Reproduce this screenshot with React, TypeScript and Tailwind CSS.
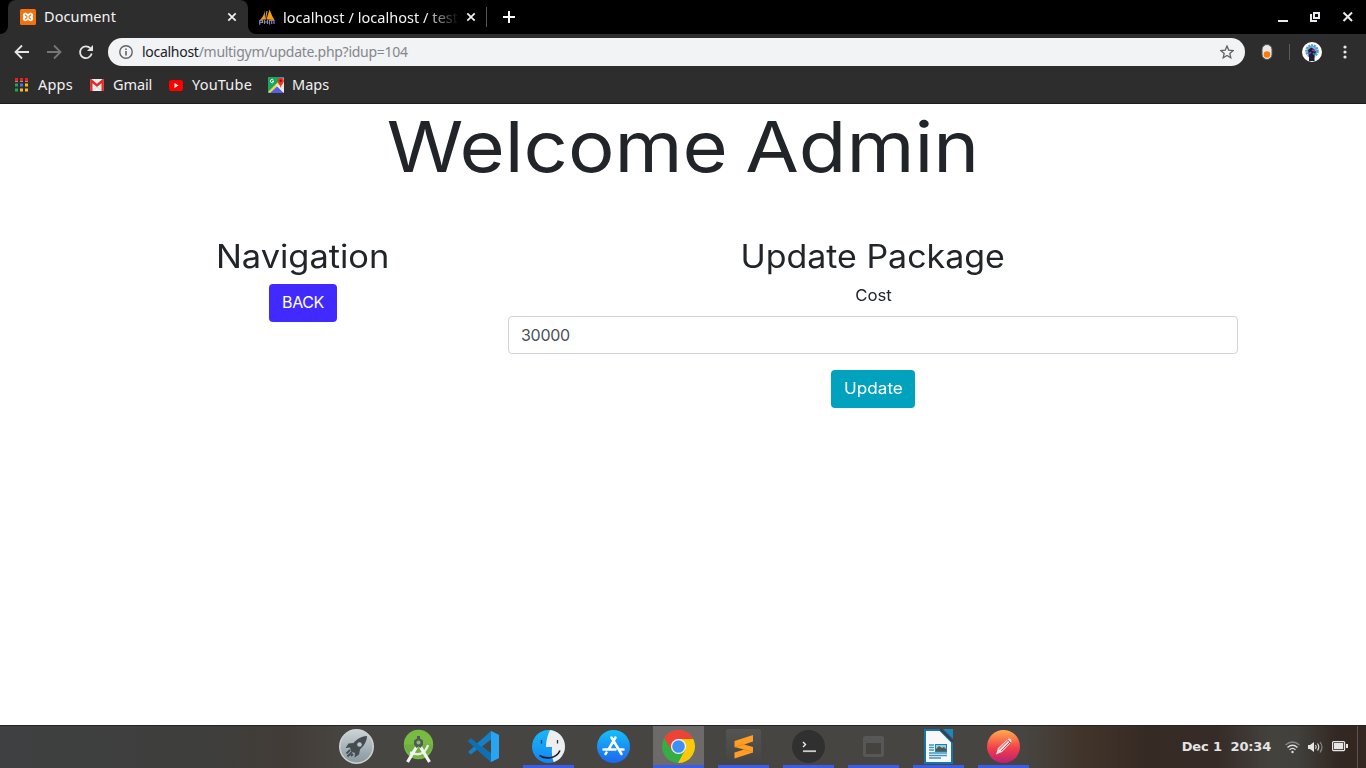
import React from "react";

const ubuntu = "font-['Noto_Sans','Open_Sans',sans-serif]";

function Xampp() {
  return (
    <svg width="16" height="16" viewBox="0 0 16 16">
      <rect width="16" height="16" rx="1.5" fill="#f4700c" />
      <path d="M3.500 7.800C2 6 3.200 3.700 5.300 3.700C7 3.700 7.300 5 8 5C8.700 5 9 3.700 10.700 3.700C12.800 3.700 14 6 12.500 7.800C14 9.800 12.800 12.200 10.700 12.200C9 12.200 8.700 11 8 11C7.300 11 7 12.200 5.300 12.200C3.200 12.200 2 9.800 3.500 7.800Z" fill="#fff" />
      <path d="M5.300 6L7 7.500M10.700 6L9 7.500M5.300 10L7 8.700M10.700 10L9 8.700" stroke="#f4700c" strokeWidth="1.100" strokeLinecap="round" />
    </svg>
  );
}

function Pma() {
  return (
    <svg width="16" height="16" viewBox="0 0 16 16">
      <path d="M5.800 1.500C5.500 5 3.500 8.500 1 11L6 10.500Z" fill="#f89c0e" />
      <path d="M10.500 0.500L7.500 10.500L15.500 11C13.500 8 12 4 10.500 0.500Z" fill="#f89c0e" />
      <path d="M8 2L6.500 10.500" stroke="#b4b4a0" strokeWidth="1" />
      <path d="M0.700 15.700V11.700H3.500V13.500H1M5.500 11V15M8.500 11V15M5.500 13H8.500M10.500 15.500V11.500H15V15M12.700 12V15" fill="none" stroke="#8583b0" strokeWidth="1.200" />
    </svg>
  );
}

function Cross() {
  return (
    <svg width="10" height="10" viewBox="0 0 10 10">
      <path d="M1.300 1.300L8.700 8.700M8.700 1.300L1.300 8.700" stroke="#f1f1f1" strokeWidth="1.700" />
    </svg>
  );
}

function TabBar() {
  return (
    <div className="flex h-[34px] bg-black">
      <div className="flex w-2 bg-[#2d2d2d]"><div className="w-full rounded-br-lg bg-black" /></div>
      <div className="flex w-60 items-center rounded-t-lg bg-[#2d2d2d] pr-[11px] pl-3">
        <Xampp />
        <span className="ml-2 text-[14.5px] tracking-[0.1px] text-[#f4f4f4]">Document</span>
        <span className="ml-auto"><Cross /></span>
      </div>
      <div className="flex w-2 bg-[#2d2d2d]"><div className="w-full rounded-bl-lg bg-black" /></div>
      <div className="flex w-[230px] items-center pl-[3px]">
        <Pma />
        <div className="mb-px ml-2 w-[174px] overflow-hidden [mask-image:linear-gradient(to_right,black_142px,transparent_176px)]">
          <span className="text-[14.5px] tracking-[0.04px] whitespace-nowrap text-[#f4f4f4]">localhost / localhost / test</span>
        </div>
        <span className="ml-[9px]"><Cross /></span>
      </div>
      <div className="mt-[7px] h-5 w-px bg-[#555]" />
      <svg className="mt-[11px] ml-[15px]" width="14" height="12" viewBox="0 0 14 12"><path d="M7 0V12M1 6H13" stroke="#fff" strokeWidth="2" /></svg>
      <svg className="mt-2 ml-auto" width="88" height="18" viewBox="0 0 88 18">
        <path d="M0 13H10" stroke="#e8e8ee" strokeWidth="2" />
        <path d="M36 5H41V10H36ZM33 6V13H39" fill="none" stroke="#e8e8ee" strokeWidth="2" />
        <path d="M65.500 4.500L74 13M74 4.500L65.500 13" stroke="#e8e8ee" strokeWidth="2" />
      </svg>
    </div>
  );
}

function Toolbar() {
  return (
    <div className="flex h-9 items-center bg-[#2d2d2d]">
      <svg className="ml-[14px]" width="80" height="16" viewBox="0 0 80 16" fill="none" strokeWidth="1.800">
        <path d="M15 8H2M8 1.500L1.500 8L8 14.500" stroke="#e5e5e5" />
        <path d="M33 8H46M40 1.500L46.500 8L40 14.500" stroke="#777" />
        <path d="M77.700 9.500A5.900 5.900 0 1 1 76.300 4.200" stroke="#e5e5e5" />
        <path d="M79 1V7H73Z" fill="#e5e5e5" />
      </svg>
      <div className="ml-[14px] flex h-7 w-[1137px] items-center rounded-full bg-[#f1f3f4] pr-[11px] pl-[11px]">
        <svg width="14" height="14" viewBox="0 0 14 14"><circle cx="7" cy="7" r="6.200" fill="none" stroke="#5f6368" strokeWidth="1.400" /><path d="M7 6V10.500M7 3.500V5" stroke="#5f6368" strokeWidth="1.600" /></svg>
        <span className="mb-px ml-[9px] text-[14px] tracking-[-0.28px] text-[#85878a]"><span className="text-[#202124]">localhost</span>/multigym/update.php?idup=104</span>
        <svg className="ml-auto" width="14" height="14" viewBox="0 0 14 14"><path d="M7 1L8.700 5.100L13.200 5.500L9.800 8.400L10.800 12.800L7 10.500L3.200 12.800L4.200 8.400L0.800 5.500L5.300 5.100Z" fill="none" stroke="#5f6368" strokeWidth="1.300" /></svg>
      </div>
      <svg className="ml-4" width="12" height="18" viewBox="0 0 12 18"><rect x="1" y="1.500" width="10" height="15" rx="5" fill="#e9e9e9" stroke="#555" /><circle cx="6" cy="11.500" r="3.300" fill="#ff780a" /></svg>
      <div className="ml-4 h-4 w-px bg-[#5c5c5c]" />
      <svg className="ml-3" width="20" height="20" viewBox="0 0 20 20">
        <circle cx="10" cy="10" r="10" fill="#fff" />
        <circle cx="10" cy="9" r="5.500" fill="#84b8d8" stroke="#559ecb" strokeWidth="2.600" strokeDasharray="2 .7" />
        <path d="M7 19V14L6 8L9 5.500L12 7L14 10L12.500 13V19Z" fill="#1e1e35" />
        <path d="M10 8L13 9M7 12L9 10" stroke="#a22acb" strokeWidth="1.600" /><path d="M11 11L13 13" stroke="#16a38b" strokeWidth="1.400" />
      </svg>
      <svg className="ml-[21px]" width="4" height="14" viewBox="0 0 4 14" fill="#e8e8e8"><circle cx="2" cy="2" r="1.600" /><circle cx="2" cy="7" r="1.600" /><circle cx="2" cy="12" r="1.600" /></svg>
    </div>
  );
}

function Bookmarks() {
  return (
    <div className="flex h-[34px] items-center border-b border-[#1c1c1c] bg-[#2d2d2d] pb-[3px] text-[14.5px] text-[#f1f1f1]">
      <svg className="ml-[15px]" width="13" height="14" viewBox="0 0 13 14">
        <path d="M0 1.500H3M5 1.500H8M10 1.500H13" stroke="#f21c1c" strokeWidth="3" />
        <path d="M0 3.500H13" stroke="#ddd" strokeWidth=".6" strokeDasharray="3 2" />
        <path d="M0 7H3M0 12H3" stroke="#1fa65a" strokeWidth="3" /><path d="M5 7H8" stroke="#4374f2" strokeWidth="3" /><path d="M10 7H13M5 12H8M10 12H13" stroke="#fbb912" strokeWidth="3" />
      </svg>
      <span className="ml-[10px] w-[36px] tracking-[0.2px] whitespace-nowrap">Apps</span>
      <svg className="ml-4" width="14" height="12" viewBox="0 0 14 12"><rect width="14" height="12" rx="1" fill="#eee" /><path d="M1.300 12V1.500L7 6.500L12.700 1.500V12" fill="none" stroke="#e02b22" strokeWidth="2.400" /><path d="M3 11L7 8L11 11" fill="none" stroke="#d5d5d5" /></svg>
      <span className="ml-[9px] w-[40px] tracking-[-0.1px] whitespace-nowrap">Gmail</span>
      <svg className="ml-4" width="14" height="11" viewBox="0 0 14 11"><rect width="14" height="11" rx="2.500" fill="#f00" /><path d="M5.500 3V8L9.500 5.500Z" fill="#fff" /></svg>
      <span className="ml-[9px] w-[61px] tracking-[0.2px] whitespace-nowrap">YouTube</span>
      <svg className="ml-[15px]" width="16" height="16" viewBox="0 0 16 16">
        <rect width="16" height="16" rx="1" fill="#4d88ee" /><path d="M0 0H12L9 8L0 16Z" fill="#18a75b" /><path d="M0 16L8 8L16 16Z" fill="#5361e8" /><path d="M8 8L16 1V16Z" fill="#e5e5e5" /><path d="M0 15L12 3L14 5L2 16Z" fill="#f6d450" /><path d="M8.500 7.500L15.500 14.500" stroke="#eee" strokeWidth="1.500" />
        <path d="M9.500 4A3.200 3.200 0 1 1 15.900 4C15.900 6.500 13.500 7 12.700 11C11.900 7 9.500 6.500 9.500 4Z" fill="#ee3425" /><circle cx="12.700" cy="3.800" r="1.200" fill="#791914" /><path d="M5.500 3.200A1.700 1.700 0 1 0 5.500 5V4.300H4" fill="none" stroke="#fff" strokeWidth="1" />
      </svg>
      <span className="ml-2">Maps</span>
    </div>
  );
}

function Page() {
  return (
    <main className="h-[621px] bg-white text-center font-[Inter,sans-serif] text-[#212529]">
      <h1 className="h-[134px] scale-x-[1.11] text-[70px] leading-[86px] [word-spacing:-4px]">Welcome Admin</h1>
      <div className="mx-auto flex w-[1140px]">
        <section className="flex w-[380px] flex-col items-center px-[15px]">
          <h2 className="mb-2 scale-x-[1.075] text-[32px] leading-[38px]">Navigation</h2>
          <button className="h-[38px] w-[68px] rounded bg-[#412aff] pb-px text-[16px] leading-[37px] tracking-[-0.4px] text-white">BACK</button>
        </section>
        <section className="flex w-[760px] flex-col items-center px-[15px]">
          <h2 className="mb-2 scale-x-[1.06] text-[32px] leading-[38px]">Update Package</h2>
          <label className="mb-[9px] scale-x-[1.05] text-[16px] leading-[23px]">Cost</label>
          <input defaultValue="30000" className="mb-4 h-[38px] w-full rounded border border-[#ced4da] px-3 text-[16px] tracking-[-0.3px] text-[#495057]" />
          <button className="h-[38px] w-[84px] rounded bg-[#00a2bd] pb-px text-[16px] leading-[37px] text-white"><span className="inline-block scale-x-[1.07]">Update</span></button>
        </section>
      </div>
    </main>
  );
}

function Rocket() {
  return (
    <svg className="ml-[6px]" width="35" height="35" viewBox="0 0 35 35">
      <defs><linearGradient id="rk" x2="0" y2="1"><stop stopColor="#cbd3d6" /><stop offset="1" stopColor="#86979e" /></linearGradient></defs>
      <circle cx="17.500" cy="17.500" r="16.700" fill="url(#rk)" stroke="#cfcfcf" strokeWidth="1.600" />
      <path d="M28 7C23 7 18 10 14.500 14L9.500 14.500L6.500 19L11 18.500L12 22.500L16 24L15.500 28.500L20 25.500L21 20.500C25 17 28 12 28 7Z" fill="#454d51" />
      <circle cx="20.500" cy="15.500" r="2.300" fill="#bac6ca" /><path d="M11 21L7.500 24.500M13 23L8.500 27.500M14 25L12 27" stroke="#454d51" strokeWidth="1.800" />
    </svg>
  );
}
function Android() {
  return (
    <svg width="35" height="35" viewBox="0 0 35 35">
      <circle cx="17.500" cy="15.500" r="14.700" fill="#78bb42" /><path d="M3 15.500H32A14.700 14.700 0 0 1 3 15.500Z" fill="#609d39" opacity=".4" />
      <path d="M9 23.500Q23 29 27 16" fill="none" stroke="#e9e9e9" strokeWidth="2.500" />
      <path d="M15.500 18L6.500 33M19.500 18L28.500 33" stroke="#f3f3f3" strokeWidth="3.200" />
      <path d="M16 7H19V9.500L22 11.500V15.500L19.500 19L17.500 17L15.500 19L13 15.500V11.500L16 9.500Z" fill="#52595b" /><circle cx="17.500" cy="13.500" r="2" fill="#88bb68" />
    </svg>
  );
}
function Code() {
  return (
    <svg width="31" height="31" viewBox="0 0 31 31">
      <path fillRule="evenodd" d="M23 0L31 4V27L23 31L9 18.500L3 23.500L0 21L6 15.500L0 10L3 7.500L9 12.500ZM23 8.500L14 15.500L23 22.500Z" fill="#1680c5" /><path d="M0 10L3 7.500L9 12.500L23 22.500V31L9 18.500Z" fill="#0e70b4" /><path d="M23 0L31 4V27L23 31Z" fill="#27a4f2" />
    </svg>
  );
}
function Finder() {
  return (
    <svg width="33" height="33" viewBox="0 0 33 33">
      <defs><linearGradient id="fd" x2="0" y2="1"><stop stopColor="#16b9fb" /><stop offset="1" stopColor="#1684f0" /></linearGradient><clipPath id="fc"><circle cx="16.500" cy="16.500" r="16.500" /></clipPath></defs>
      <g clipPath="url(#fc)"><path d="M0 0H33V33H0Z" fill="url(#fd)" /><path d="M18 0C15 6 14 12 14 17H20C19.500 23 20 28 22 33H33V0Z" fill="#eee" /></g>
      <path d="M9.500 10V13.500M25.500 10V13.500" stroke="#143850" strokeWidth="1.300" /><path d="M7.500 25.500C13 29 24 29.500 28 20.500" fill="none" stroke="#171d29" strokeWidth="1.600" />
    </svg>
  );
}
function Store() {
  return (
    <svg width="33" height="33" viewBox="0 0 33 33">
      <defs><linearGradient id="st" x2="0" y2="1"><stop stopColor="#14c0fb" /><stop offset="1" stopColor="#1d65ef" /></linearGradient></defs>
      <circle cx="16.500" cy="16.500" r="16.500" fill="url(#st)" /><path d="M14.500 7.500L24.500 24M18.500 7.500L11.500 19.500M9.500 22.500L8.500 24M6.500 19.500H18.500M22.500 19.500H26.500" fill="none" stroke="#fff" strokeWidth="2.500" strokeLinecap="round" />
    </svg>
  );
}
function Chrome() {
  return (
    <svg width="33" height="33" viewBox="0 0 33 33">
      <circle cx="16.500" cy="16.500" r="16.500" fill="#37ac45" /><path d="M2.200 8.250A16.500 16.500 0 0 1 30.800 8.250L31 9H16.500L9.500 20Z" fill="#ed4337" /><path d="M16.500 9H31.200A16.500 16.500 0 0 1 16 33L23 20Z" fill="#fbc90a" />
      <circle cx="16.500" cy="16.500" r="7.600" fill="#f4f4f4" /><circle cx="16.500" cy="16.500" r="6.300" fill="#3e91f4" />
    </svg>
  );
}
function Sublime() {
  return (
    <svg width="35" height="35" viewBox="0 0 35 35"><defs><linearGradient id="su" x2="0" y2="1"><stop stopColor="#545454" /><stop offset="1" stopColor="#454442" /></linearGradient></defs><rect width="35" height="35" rx="2" fill="url(#su)" /><path d="M8.500 12L27 6V12.500L18 15.500L27 18V23.500L8.500 29.500V23.500L18 20.500L8.500 18Z" fill="#ff9d24" /><path d="M18 15.500L8.500 18M18 20.500L27 23" stroke="#e88918" strokeWidth=".8" /></svg>
  );
}
function Terminal() {
  return <svg width="33" height="33" viewBox="0 0 33 33"><circle cx="16.500" cy="16.500" r="16.500" fill="#303030" /><path d="M11 12L13.500 14.500L11 17" fill="none" stroke="#eee" strokeWidth="1.400" /><path d="M11 21.200H24" stroke="#ccc" strokeWidth="1.800" /></svg>;
}
function WindowIcon() {
  return <svg width="21" height="21" viewBox="0 0 21 21"><rect width="21" height="21" rx="2" fill="#575757" /><rect x="3" y="8" width="15" height="10" fill="#46433f" /><path d="M3 7.500H18" stroke="#444" /></svg>;
}
function Writer() {
  return (
    <svg width="29" height="35" viewBox="0 0 29 35">
      <path d="M1 1H16L28 13V34H1Z" fill="#f8f8f8" stroke="#1675ad" strokeWidth="2" /><path d="M19 0H29V10Z" fill="#1c86be" /><path d="M16 0L29 13" stroke="#284052" strokeWidth="1.500" />
      <path d="M5 16H10M5 18.500H10M5 21H10M5 24H23M5 26.500H23M5 29H17" stroke="#3b96c4" strokeWidth="1.400" /><rect x="11.500" y="15.500" width="11" height="7" fill="#8ccaf0" stroke="#247da9" /><path d="M12 22V20L15 17L18 19L20 18L22 20V22Z" fill="#535943" />
    </svg>
  );
}
function Pencil() {
  return (
    <svg width="33" height="33" viewBox="0 0 33 33">
      <defs><linearGradient id="pe" x2="0" y2="1"><stop stopColor="#ffae4c" /><stop offset=".55" stopColor="#f43e49" /><stop offset="1" stopColor="#ba2277" /></linearGradient></defs>
      <circle cx="16.500" cy="16.500" r="16.500" fill="url(#pe)" /><path d="M9 24.500L11 18L21.500 8.500Q25 8 24.500 12L15 22Z" fill="#f6dddd" /><path d="M12 19.500L21 10.500M14 21L23 12M20 9.500L24 13" stroke="#c94d5d" strokeWidth="1" />
    </svg>
  );
}

const apps = [
  { C: Rocket, open: false, active: false },
  { C: Android, open: false, active: false },
  { C: Code, open: false, active: false },
  { C: Finder, open: true, active: false },
  { C: Store, open: false, active: false },
  { C: Chrome, open: true, active: true },
  { C: Sublime, open: true, active: false },
  { C: Terminal, open: true, active: false },
  { C: WindowIcon, open: true, active: false },
  { C: Writer, open: true, active: false },
  { C: Pencil, open: true, active: false },
];

function Taskbar() {
  return (
    <footer className="flex h-[43px] border-t border-[#242424] bg-[linear-gradient(90deg,#3e4041_0%,#3e3e3c_15%,#423c37_21%,#474541_25%,#474541_75%,#41352b_79%,#362a24_84%,#362b27_89%,#44423d_93%,#41403c_95%,#322722_98%,#352721_100%)] pl-[328px]">
      <div className="flex gap-[14px]">
        {apps.map(({ C, open, active }, i) => (
          <div key={i} className={`flex w-[51px] items-center justify-center border-b-[3px] pt-px ${open ? "border-[#3b5ce6]" : "border-transparent"} ${active ? "bg-[#6c6b69]" : ""}`}><C /></div>
        ))}
      </div>
      <div className="ml-auto flex items-center">
        <span className="mr-[14px] font-['DejaVu_Sans',sans-serif] text-[13px] font-bold tracking-[-0.2px] whitespace-pre text-[#e4e4e4] [word-spacing:0.1px]">Dec 1  20:34</span>
        <svg width="64" height="14" viewBox="0 0 64 14" fill="none">
          <path d="M0.500 5Q7.500 -1 14.500 5" stroke="#888581" strokeWidth="1.300" /><path d="M2.500 7.500Q7.500 3 12.500 7.500M4.500 9.700Q7.500 7 10.500 9.700" stroke="#dedede" strokeWidth="1.300" /><circle cx="7.500" cy="12" r="1.200" fill="#dedede" />
          <path d="M23 5H25L29 2V12L25 9H23Z" fill="#e6e6e6" /><path d="M30.500 5Q32 7 30.500 9M32.500 3.500Q35 7 32.500 10.500" stroke="#dedede" strokeWidth="1.200" /><path d="M35 2Q39 7 35 12.500" stroke="#8d8983" strokeWidth="1.200" />
          <rect x="47.600" y="1.600" width="12" height="9" rx="1" stroke="#e6e6e6" strokeWidth="1.200" /><rect x="49" y="3" width="9.200" height="6.200" fill="#e6e6e6" /><path d="M62 4V8" stroke="#e6e6e6" strokeWidth="2" />
        </svg>
        <div className="ml-2 h-full w-px bg-[#555]" />
        <div className="w-2" />
      </div>
    </footer>
  );
}

export default function App() {
  return (
    <div className={`flex h-[768px] w-[1366px] flex-col overflow-hidden bg-white ${ubuntu}`}>
      <TabBar />
      <Toolbar />
      <Bookmarks />
      <Page />
      <Taskbar />
    </div>
  );
}
